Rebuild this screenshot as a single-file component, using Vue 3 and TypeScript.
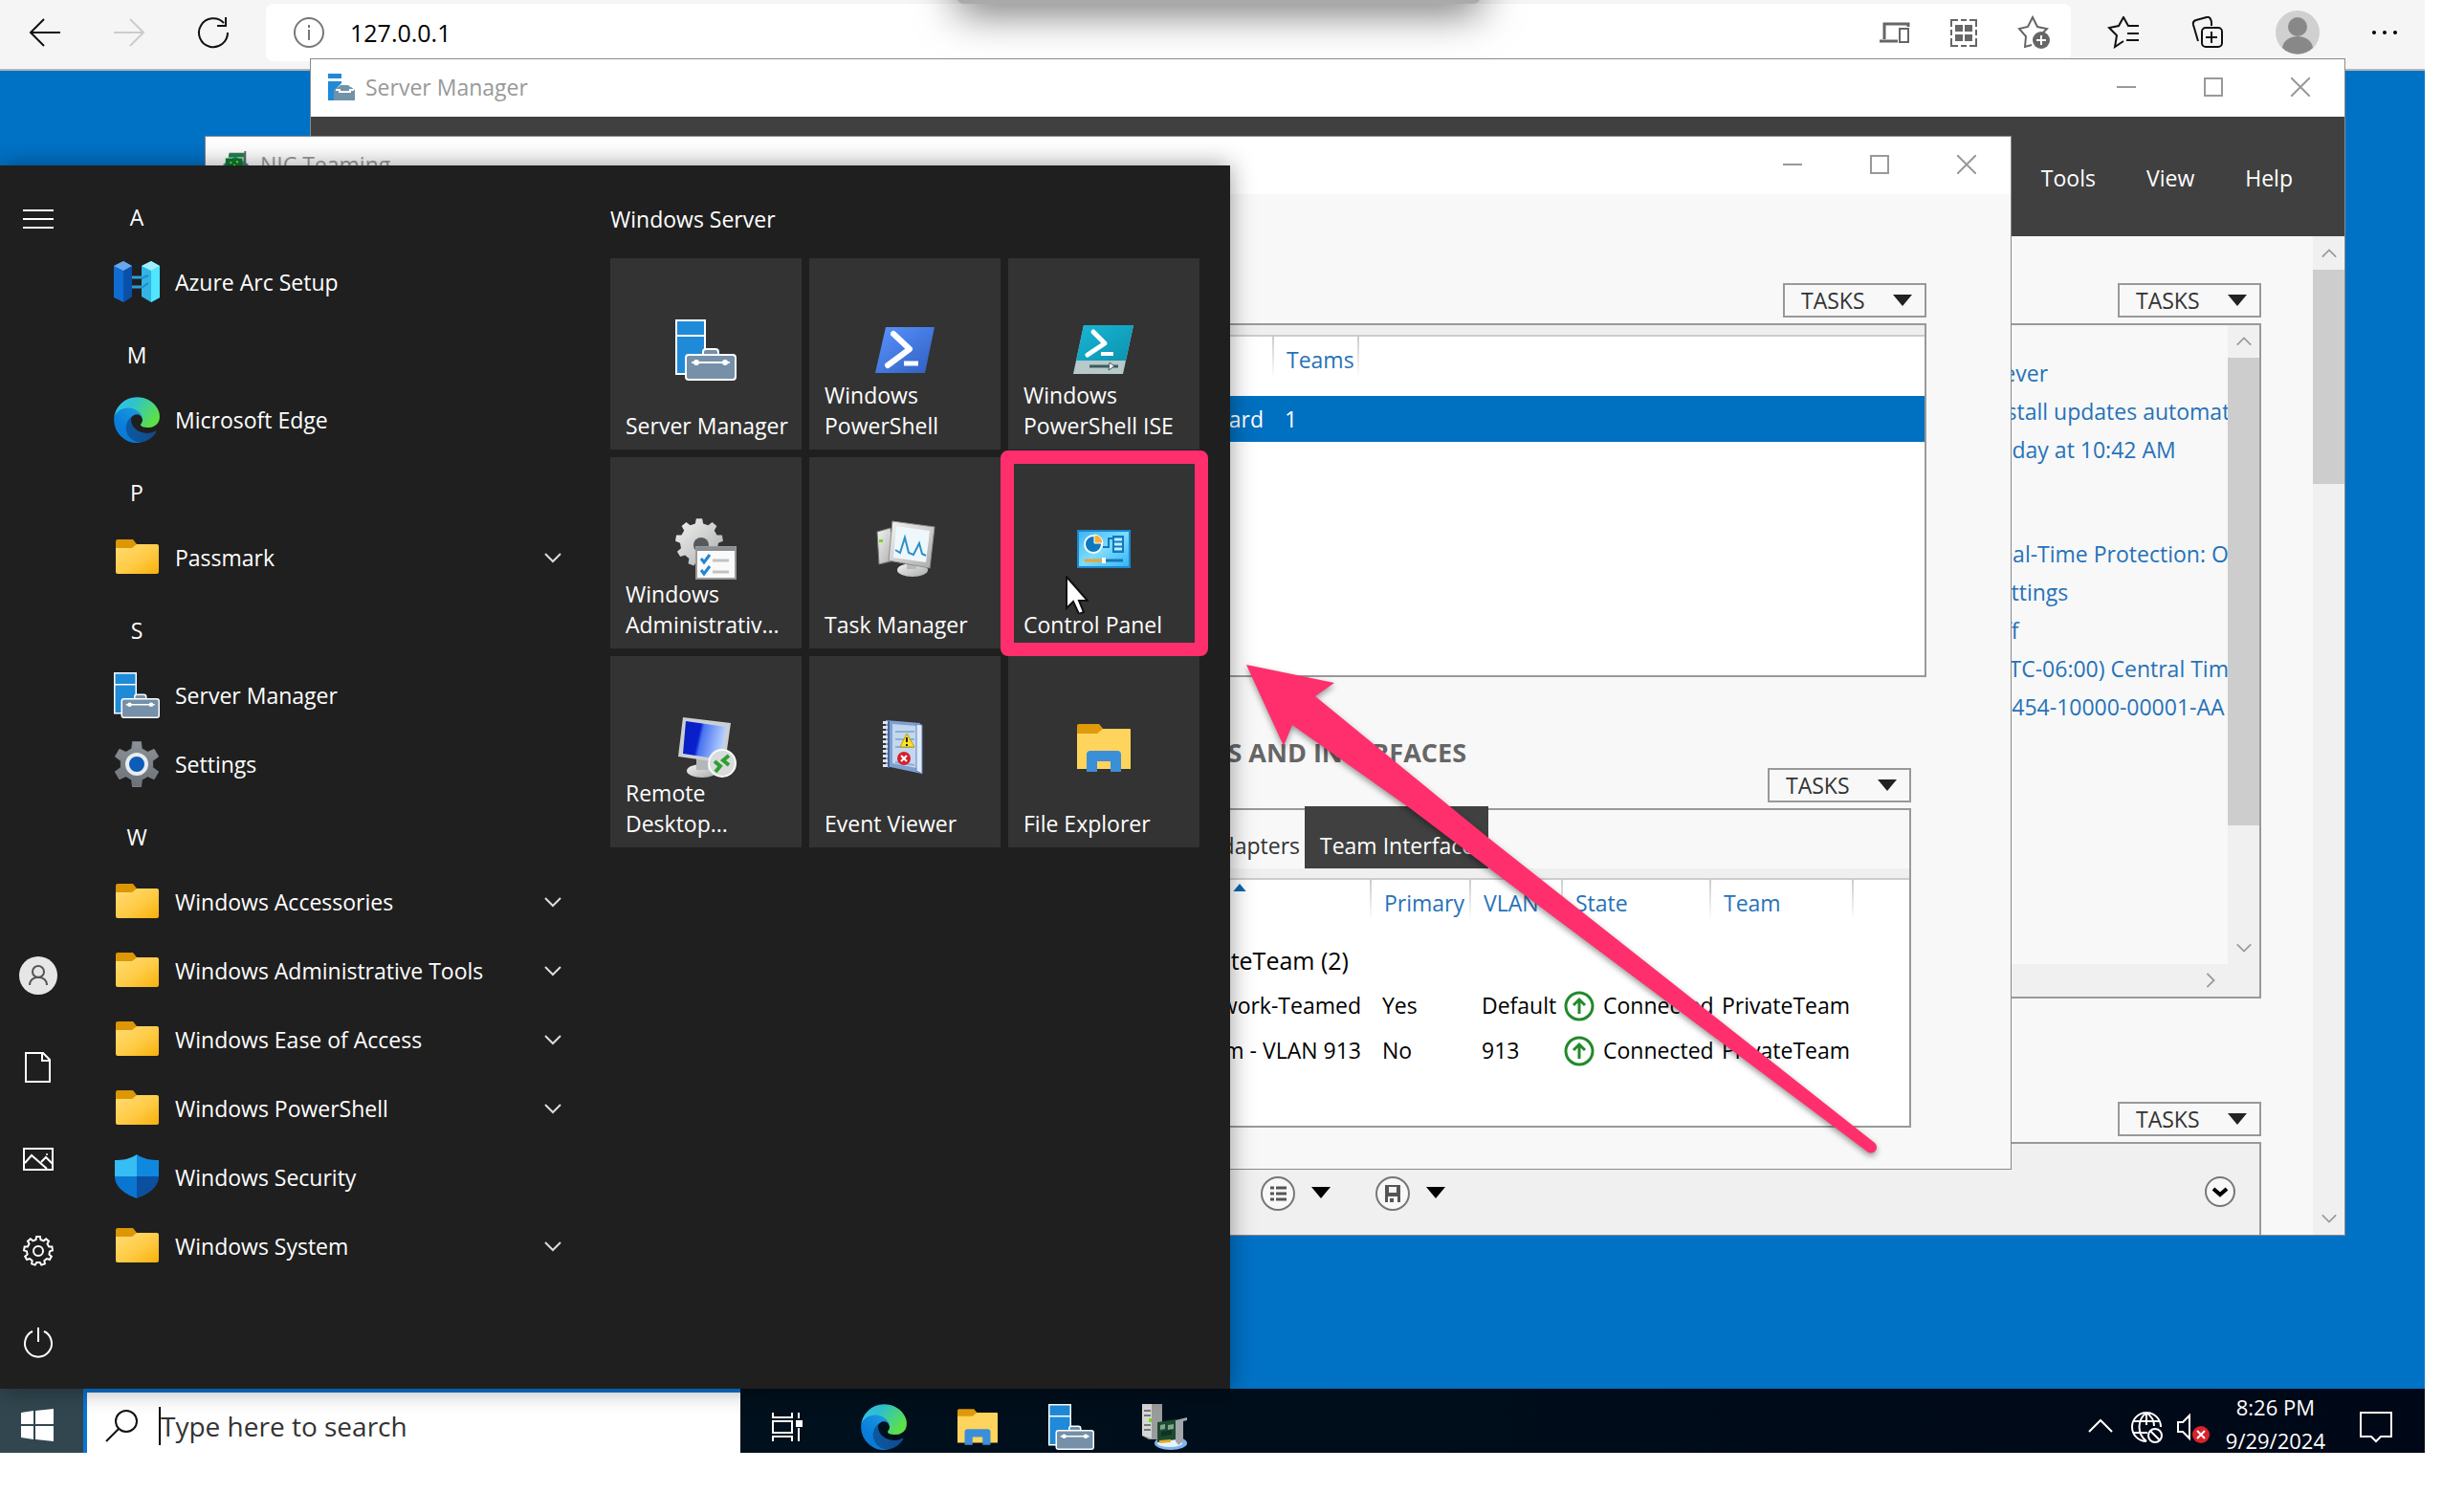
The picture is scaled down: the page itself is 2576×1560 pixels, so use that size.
<script setup lang="ts">
interface MenuEntry {
  letter?: string
  label?: string
  icon?: string
  folder?: boolean
}

interface Tile {
  lines: string[]
  icon: string
}

const menuEntries: MenuEntry[] = [
  { letter: 'A' },
  { label: 'Azure Arc Setup', icon: 'arc' },
  { letter: 'M' },
  { label: 'Microsoft Edge', icon: 'edge' },
  { letter: 'P' },
  { label: 'Passmark', icon: 'folder', folder: true },
  { letter: 'S' },
  { label: 'Server Manager', icon: 'server' },
  { label: 'Settings', icon: 'settings' },
  { letter: 'W' },
  { label: 'Windows Accessories', icon: 'folder', folder: true },
  { label: 'Windows Administrative Tools', icon: 'folder', folder: true },
  { label: 'Windows Ease of Access', icon: 'folder', folder: true },
  { label: 'Windows PowerShell', icon: 'folder', folder: true },
  { label: 'Windows Security', icon: 'shield' },
  { label: 'Windows System', icon: 'folder', folder: true },
]

const tiles: Tile[] = [
  { lines: ['Server Manager'], icon: 'server' },
  { lines: ['Windows', 'PowerShell'], icon: 'powershell' },
  { lines: ['Windows', 'PowerShell ISE'], icon: 'ise' },
  { lines: ['Windows', 'Administrativ...'], icon: 'admin' },
  { lines: ['Task Manager'], icon: 'taskmgr' },
  { lines: ['Control Panel'], icon: 'control' },
  { lines: ['Remote', 'Desktop...'], icon: 'remote' },
  { lines: ['Event Viewer'], icon: 'event' },
  { lines: ['File Explorer'], icon: 'explorer' },
]

const railIcons = [
  { icon: 'user', label: 'Account' },
  { icon: 'document', label: 'Documents' },
  { icon: 'picture', label: 'Pictures' },
  { icon: 'gear', label: 'Settings' },
  { icon: 'power', label: 'Power' },
]

const taskbarApps = [
  { icon: 'taskview', label: 'Task View' },
  { icon: 'edge', label: 'Microsoft Edge' },
  { icon: 'explorer', label: 'File Explorer' },
  { icon: 'server', label: 'Server Manager' },
  { icon: 'nic', label: 'NIC Teaming' },
]

const updateLinks = ['Never', 'Install updates automat', 'Today at 10:42 AM']
const systemLinks = [
  'Real-Time Protection: O',
  'Settings',
  'Off',
  '(UTC-06:00) Central Tim',
  '00454-10000-00001-AA',
]

const interfaces = [
  { name: 'Network-Teamed', primary: 'Yes', vlan: 'Default', state: 'Connected', team: 'PrivateTeam' },
  { name: 'PrivateTeam - VLAN 913', primary: 'No', vlan: '913', state: 'Connected', team: 'PrivateTeam' },
]

const captionButtons = ['minimize', 'maximize', 'close']

// Closed outline of a cog wheel centred on (c, c).
function cog(c: number, outer: number, inner: number, teeth: number): string {
  const step = (Math.PI * 2) / teeth
  const points: string[] = []
  for (let i = 0; i < teeth; i++) {
    const a = i * step - Math.PI / 2
    const corners: [number, number][] = [
      [inner, a - step * 0.3],
      [outer, a - step * 0.18],
      [outer, a + step * 0.18],
      [inner, a + step * 0.3],
    ]
    for (const [r, t] of corners) {
      points.push(`${(c + r * Math.cos(t)).toFixed(2)} ${(c + r * Math.sin(t)).toFixed(2)}`)
    }
  }
  return `M${points.join('L')}Z`
}
</script>

<template>
  <svg class="sprite" aria-hidden="true">
    <defs>
      <linearGradient id="g-folder" x1="0" y1="0" x2="1" y2="1">
        <stop offset="0" stop-color="#ffdc74" /><stop offset=".55" stop-color="#ffcb45" /><stop offset="1" stop-color="#f8b00a" />
      </linearGradient>
      <linearGradient id="g-edge-a" x1="0" y1="0" x2="1" y2="0">
        <stop offset="0" stop-color="#0c59a4" /><stop offset="1" stop-color="#114a8b" />
      </linearGradient>
      <linearGradient id="g-edge-b" x1=".8" y1="0" x2=".2" y2="1">
        <stop offset="0" stop-color="#1b9de2" /><stop offset=".6" stop-color="#0a7fdb" /><stop offset="1" stop-color="#0a78d0" />
      </linearGradient>
      <linearGradient id="g-edge-c" x1="0" y1="0" x2="1" y2=".5">
        <stop offset="0" stop-color="#35c1f1" /><stop offset=".4" stop-color="#2fc2d2" /><stop offset="1" stop-color="#5be049" />
      </linearGradient>
      <linearGradient id="g-ps" x1="0" y1="0" x2="1" y2="1">
        <stop offset="0" stop-color="#5a94ff" /><stop offset="1" stop-color="#2f5fc0" />
      </linearGradient>
      <linearGradient id="g-ise" x1="0" y1="0" x2="1" y2="1">
        <stop offset="0" stop-color="#19b6d6" /><stop offset="1" stop-color="#0b93ae" />
      </linearGradient>
      <linearGradient id="g-metal" x1="0" y1="0" x2="1" y2="1">
        <stop offset="0" stop-color="#f4f4f2" /><stop offset="1" stop-color="#a9abab" />
      </linearGradient>
      <linearGradient id="g-cp" x1="0" y1="0" x2="1" y2="1">
        <stop offset="0" stop-color="#3cb4f4" /><stop offset=".5" stop-color="#7fdcff" /><stop offset="1" stop-color="#36b2f2" />
      </linearGradient>
      <linearGradient id="g-screen" x1="0" y1="0" x2="1" y2=".2">
        <stop offset="0" stop-color="#0722bb" /><stop offset=".42" stop-color="#0a1fd0" /><stop offset=".5" stop-color="#4a74f0" /><stop offset="1" stop-color="#b4d0ff" />
      </linearGradient>
      <linearGradient id="g-gear" x1="0" y1="0" x2="0" y2="1">
        <stop offset="0" stop-color="#8c9297" /><stop offset="1" stop-color="#6b7177" />
      </linearGradient>
    </defs>

    <symbol id="i-folder" viewBox="0 0 48 48">
      <path d="M2 7a2 2 0 0 1 2-2h16l4 5-2 6H2z" fill="#dc9606" />
      <path d="M2 14h17l5-4h21a2 2 0 0 1 2 2v27a2 2 0 0 1-2 2H4a2 2 0 0 1-2-2z" fill="url(#g-folder)" />
    </symbol>
    <symbol id="i-explorer" viewBox="0 0 64 64">
      <path d="M4 9a2 2 0 0 1 2-2h21l5 6-3 6H4z" fill="#e09a0c" />
      <path d="M4 17h21l6-5h28a1 1 0 0 1 1 1v41H4z" fill="#ffd45c" />
      <path d="M14 57V39q0-4 4-4h28q4 0 4 4v18H39V46H25v11z" fill="#3b8ed8" />
    </symbol>
    <symbol id="i-edge" viewBox="4 4 257 256">
      <path fill="url(#g-edge-a)" d="M235.68 195.46a93.73 93.73 0 0 1-10.54 4.71 101.87 101.87 0 0 1-35.9 6.46c-47.32 0-88.54-32.55-88.54-74.32A31.48 31.48 0 0 1 117.13 105c-42.8 1.8-53.8 46.4-53.8 72.53 0 73.88 68.09 81.37 82.76 81.37 7.91 0 19.84-2.3 27-4.56l1.31-.44a128.34 128.34 0 0 0 66.6-52.8 4 4 0 0 0-5.32-5.64z" />
      <path fill="url(#g-edge-b)" d="M110.34 246.34A79.2 79.2 0 0 1 87.6 225a80.72 80.72 0 0 1 29.53-120c3.12-1.47 8.45-4.13 15.54-4a32.35 32.35 0 0 1 25.69 13 31.88 31.88 0 0 1 6.36 18.66c0-.21 24.46-79.6-80-79.6-43.9 0-80 41.66-80 78.21a130.15 130.15 0 0 0 12.11 56 128 128 0 0 0 156.38 67.11 75.55 75.55 0 0 1-62.78-8z" />
      <path fill="url(#g-edge-c)" d="M156.94 153.78c-.81 1.05-3.3 2.5-3.3 5.66 0 2.61 1.7 5.12 4.72 7.23 14.38 10 41.49 8.68 41.56 8.68a59.56 59.56 0 0 0 30.27-8.35 61.38 61.38 0 0 0 30.43-52.88c.26-22.41-8-37.31-11.34-43.91-21.19-41.45-66.93-65.29-116.67-65.29a128 128 0 0 0-128 126.2c.48-36.54 36.8-66.05 80-66.05 3.5 0 23.46.34 42 10.07 16.34 8.58 24.9 18.94 30.85 29.21 6.18 10.67 7.28 24.15 7.28 29.52s-2.74 13.33-7.8 19.91z" />
    </symbol>
    <symbol id="i-arc" viewBox="0 0 48 48">
      <path d="M18 19h12M18 29h12" stroke="#2a9fd8" stroke-width="3" />
      <path d="M0 7 10 2l9 5v32l-9 6-10-5z" fill="#0f6cd0" />
      <path d="M10 12 19 7v32l-9 6z" fill="#0a4fa8" />
      <path d="M0 7 10 2l9 5-9 5z" fill="#6aa8ec" />
      <path d="M29 7l10-5 9 5v33l-9 5-10-6z" fill="#33b4e4" />
      <path d="M39 12 48 7v33l-9 5z" fill="#50e6ff" />
      <path d="M29 7l10-5 9 5-9 5z" fill="#a2f0ff" />
      <path d="M29 20l7-3M29 30l7-5" stroke="#1b8fc8" stroke-width="2" />
    </symbol>
    <symbol id="i-server" viewBox="0 0 64 64">
      <path d="M1 1h30v56H1z" fill="#1f8ad8" stroke="#fff" stroke-width="2" />
      <path d="M1 17h30" stroke="#fff" stroke-width="2" />
      <path d="M29 38v-4q0-3 3-3h10q3 0 3 3v4" fill="#7590a8" stroke="#fff" stroke-width="2" />
      <rect x="11" y="37" width="52" height="26" rx="3" fill="#7590a8" stroke="#fff" stroke-width="2" />
      <path d="M17 45h40" stroke="#fff" stroke-width="2" />
      <circle cx="22" cy="45" r="3" fill="#fff" /><circle cx="52" cy="45" r="3" fill="#fff" />
    </symbol>
    <symbol id="i-server-sm" viewBox="0 0 28 28">
      <path d="M0 0h14v5H0zM0 8h14v2L6 18v10H0z" fill="#1f8ad8" />
      <path d="M6 17l4-3h14l4 3v11H6z" fill="#7292a8" /><path d="M12 15q0-2 2-2h6q2 0 2 2" fill="none" stroke="#7292a8" stroke-width="2" />
      <path d="M8 17h4v2h11v-2h4" fill="none" stroke="#fff" stroke-width="2" />
    </symbol>
    <symbol id="i-settings" viewBox="0 0 48 48">
      <path :d="cog(24, 24, 17, 6)" fill="url(#g-gear)" stroke="#7b8187" stroke-width="1" stroke-linejoin="round" />
      <circle cx="24" cy="24" r="10" fill="#0c5cb8" stroke="#e8ecf0" stroke-width="4" />
    </symbol>
    <symbol id="i-shield" viewBox="0 0 48 48">
      <path d="M24 0C17 5 9 6 1 6v17h23z" fill="#35bdf4" /><path d="M24 0c7 5 15 6 23 6v17H24z" fill="#0f88e0" />
      <path d="M1 23c0 12 12 19 23 23V23z" fill="#0b76d1" /><path d="M47 23c0 12-12 19-23 23V23z" fill="#0b4f9f" />
    </symbol>
    <symbol id="i-powershell" viewBox="0 0 64 64">
      <path d="M12 8h51L53 56H1z" fill="url(#g-ps)" />
      <path d="M20 15l17 16-23 17" fill="none" stroke="#fff" stroke-width="6" stroke-linecap="round" stroke-linejoin="round" />
      <path d="M31 46h15" stroke="#fff" stroke-width="5" />
    </symbol>
    <symbol id="i-ise" viewBox="0 0 64 64">
      <path d="M11 6h52L52 57H0z" fill="#b7c9ca" /><path d="M11 6h52l-8 37H3z" fill="url(#g-ise)" />
      <path d="M21 13l12 12-18 12" fill="none" stroke="#fff" stroke-width="5" stroke-linecap="round" stroke-linejoin="round" />
      <path d="M29 36h13" stroke="#fff" stroke-width="4" />
      <path d="M17 49h30" stroke="#3e5a5c" stroke-width="3" /><path d="M38 45l5 4-6 4z" fill="#fff" stroke="#3e5a5c" />
    </symbol>
    <symbol id="i-admin" viewBox="0 0 64 64">
      <path :d="cog(25, 25, 20, 9)" fill="url(#g-metal)" /><circle cx="27" cy="28" r="8" fill="#55595c" />
      <path d="M22 30h41v33H22z" fill="#fafafa" stroke="#9a9a9a" stroke-width="2" /><path d="M22 32h41" stroke="#8b8f92" stroke-width="4" />
      <path d="M27 42l3 4 6-8M27 54l3 4 6-8" fill="none" stroke="#1e86d6" stroke-width="3" /><path d="M39 44h17M39 56h17" stroke="#c2c2c2" stroke-width="3" />
    </symbol>
    <symbol id="i-taskmgr" viewBox="0 0 64 64">
      <path d="M3 14l14-4 4 34-16 4z" fill="url(#g-metal)" stroke="#777" /><path d="M5 22h4v3H5z" fill="#6fdc1c" />
      <ellipse cx="40" cy="54" rx="16" ry="7" fill="url(#g-metal)" /><path d="M34 44h10v9H34z" fill="#b8bab9" />
      <path d="M19 3l44 6-5 43-43-8z" fill="url(#g-metal)" stroke="#8d8f8f" />
      <path d="M23 8l35 5-4 33-34-5z" fill="#eef7fc" />
      <path d="M22 33l5 3 5-16 4 16 5 2 6-12 3 11 4 2" fill="none" stroke="#2c8fc9" stroke-width="2" />
    </symbol>
    <symbol id="i-control" viewBox="0 0 64 64">
      <path d="M5 13h54v38H5z" fill="url(#g-cp)" stroke="#1a88d0" stroke-width="2" />
      <circle cx="21" cy="27" r="9" fill="#0e79c0" stroke="#fff" stroke-width="2" /><path d="M22 26V17a9 9 0 0 1 9 9z" fill="#f8b13a" stroke="#fff" />
      <path d="M31 30h6v-9h5" fill="none" stroke="#0e79c0" stroke-width="2" /><path d="M41 18h12v18H41z" fill="#0e79c0" />
      <path d="M43 22h8M43 27h8M43 32h8" stroke="#bfefff" stroke-width="3" />
      <path d="M12 44h19" stroke="#f0a326" stroke-width="3" /><path d="M34 44h18" stroke="#0e79c0" stroke-width="3" /><path d="M30 41h4v6h-4z" fill="#fff" />
    </symbol>
    <symbol id="i-remote" viewBox="0 0 64 64">
      <ellipse cx="28" cy="56" rx="16" ry="7" fill="url(#g-metal)" /><path d="M22 43h12v12H22z" fill="#b4b6b8" />
      <path d="M8 0l50 6-6 42L3 41z" fill="#ccd0d4" /><path d="M11 4l42 6-5 34-40-6z" fill="url(#g-screen)" />
      <circle cx="49" cy="48" r="14" fill="#d9dcda" stroke="#fafafa" stroke-width="2" />
      <path d="M41 46l6 5-5 6M56 40l-6 5 6 5" fill="none" stroke="#2f9e35" stroke-width="4" />
    </symbol>
    <symbol id="i-event" viewBox="0 0 64 64">
      <path d="M12 3l36 3 2 53-38-8z" fill="#7fa0cf" /><path d="M19 7l25 2v44l-25-5z" fill="#c3d8ee" />
      <path d="M44 7l6 1v51l-6-3z" fill="#e0eaf8" stroke="#5f83bd" />
      <path d="M22 15h20M22 23h20M22 31h20M22 47l20 3" stroke="#8daed4" stroke-width="2" />
      <path d="M12 4v48" stroke="#dfe4ea" stroke-width="6" stroke-dasharray="3 2" /><path d="M15 4v49" stroke="#47669b" stroke-width="2" />
      <path d="M34 17l8 14H27z" fill="#ffe12a" stroke="#c39b00" /><path d="M34 21v5M34 28v2" stroke="#222" stroke-width="2" />
      <circle cx="31" cy="43" r="7" fill="#d5202a" /><path d="M28 40l6 6M34 40l-6 6" stroke="#fff" stroke-width="2" />
    </symbol>
    <symbol id="i-nic" viewBox="0 0 48 48">
      <path d="M0 0h21v37l-14 0-7-4z" fill="#9a9c9c" /><path d="M0 0h10v36L0 33z" fill="#d5d7d7" /><path d="M2 7h7M2 12h7M2 22h7M2 27h7" stroke="#777" stroke-width="2" /><path d="M7 15h3v4H7z" fill="#6fdc1c" />
      <ellipse cx="30" cy="41" rx="17" ry="7" fill="#7fb4ee" /><ellipse cx="29" cy="41" rx="13" ry="4" fill="#e7f3ff" />
      <path d="M16 19l20-3v21l-20 3z" fill="#1c4a30" /><path d="M19 22l5-1v5l-5 1zM27 22l6-1v5l-6 1z" fill="#7fa58a" /><path d="M20 29l11-2v5l-11 2z" fill="#0d3523" />
      <path d="M18 38l12-1v3l-12 1z" fill="#e5aa22" /><path d="M35 17l12-3v3l-4 1v21l-5 4-3-4z" fill="#a2a6a8" />
    </symbol>
    <symbol id="i-nic-sm" viewBox="0 0 30 30">
      <path d="M0 15l14-9 15 9-14 13z" fill="#3a86c8" /><path d="M7 2h17V0h2v24h-3V6L7 7z" fill="#5d6e64" />
      <path d="M3 8h19v18H3z" fill="#0c7c2a" /><path d="M7 3h16v4H6z" fill="#18874a" /><path d="M8 13h2M12 16h2M15 12h2M9 18h2" stroke="#9be07a" stroke-width="2" />
    </symbol>

    <symbol id="i-user" viewBox="0 0 40 40">
      <circle cx="20" cy="20" r="20" fill="#e6e6e6" /><circle cx="20" cy="16" r="6" fill="none" stroke="#555" stroke-width="2" />
      <path d="M11 30c0-11 18-11 18 0" fill="none" stroke="#555" stroke-width="2" />
    </symbol>
    <symbol id="i-document" viewBox="0 0 40 40"><path d="M7 5h18l7 7v23H7zM24 5v8h8" fill="none" stroke="#fff" stroke-width="2" /></symbol>
    <symbol id="i-picture" viewBox="0 0 40 40">
      <path d="M5 9h30v22H5z" fill="none" stroke="#fff" stroke-width="2" /><path d="M6 24l7-8 16 14M23 23l5-5 7 7" fill="none" stroke="#fff" stroke-width="2" /><circle cx="29" cy="15" r="1" fill="#fff" />
    </symbol>
    <symbol id="i-gear" viewBox="0 0 40 40"><path :d="cog(20, 15, 12, 9)" fill="none" stroke="#fff" stroke-width="2" /><circle cx="20" cy="20" r="5" fill="none" stroke="#fff" stroke-width="2" /></symbol>
    <symbol id="i-power" viewBox="0 0 40 40"><path d="M14 8a14 14 0 1 0 12 0M20 4v15" fill="none" stroke="#fff" stroke-width="2" /></symbol>
    <symbol id="i-taskview" viewBox="0 0 32 32">
      <path d="M1 1v5h20V1M1 31v-5h20v5M1 10h20v12H1zM28 1v6M28 17v14" fill="none" stroke="#fff" stroke-width="2" /><path d="M25 9h7v7h-7z" fill="#fff" />
    </symbol>
    <symbol id="i-down" viewBox="0 0 20 20"><path d="M2 6l8 8 8-8" fill="none" stroke="currentColor" stroke-width="2" /></symbol>
    <symbol id="i-triangle" viewBox="0 0 20 12"><path d="M0 0h20L10 12z" fill="currentColor" /></symbol>
    <symbol id="i-minimize" viewBox="0 0 20 20"><path d="M0 10h20" stroke="currentColor" stroke-width="2" /></symbol>
    <symbol id="i-maximize" viewBox="0 0 20 20"><path d="M1 1h18v18H1z" fill="none" stroke="currentColor" stroke-width="2" /></symbol>
    <symbol id="i-close" viewBox="0 0 20 20"><path d="M0 0l20 20M20 0L0 20" stroke="currentColor" stroke-width="2" /></symbol>
    <symbol id="i-up-circle" viewBox="0 0 32 32">
      <circle cx="16" cy="16" r="14" fill="#fff" stroke="#23892b" stroke-width="3" /><path d="M16 24V10M10 15l6-6 6 6" fill="none" stroke="#23892b" stroke-width="3" />
    </symbol>
  </svg>

  <div class="screen">
    <header class="browser">
      <button class="plain nav-btn" aria-label="Back">
        <svg width="34" height="34" viewBox="0 0 34 34"><path d="M33 17H2M16 3L2 17l14 14" fill="none" stroke="#111" stroke-width="2" /></svg>
      </button>
      <button class="plain nav-btn" aria-label="Forward">
        <svg width="34" height="34" viewBox="0 0 34 34"><path d="M1 17h31M18 3l14 14-14 14" fill="none" stroke="#ccc" stroke-width="2" /></svg>
      </button>
      <button class="plain nav-btn" aria-label="Refresh">
        <svg width="34" height="34" viewBox="0 0 34 34"><path d="M32 17A15 15 0 1 1 28 7M30 1v9h-9" fill="none" stroke="#111" stroke-width="2" /></svg>
      </button>
      <div class="address">
        <svg width="34" height="34" viewBox="0 0 34 34"><circle cx="17" cy="17" r="15" fill="none" stroke="#777" stroke-width="2" /><path d="M17 14v11M17 9v3" stroke="#777" stroke-width="2" /></svg>
        <input class="address-input" type="text" value="127.0.0.1" aria-label="Address" />
        <div class="address-icons">
          <svg width="32" height="34" viewBox="0 0 32 34"><path d="M5 24V8h25v3M0 26h19" fill="none" stroke="#666" stroke-width="3" /><path d="M21 13h9v14h-9z" fill="none" stroke="#666" stroke-width="2" /></svg>
          <svg width="32" height="34" viewBox="0 0 32 34"><path d="M3 11V4h7M22 4h7v7M29 23v8h-7M10 31H3v-8M13 4h6M13 31h6M3 14v6M29 14v6" fill="none" stroke="#666" stroke-width="2" /><path d="M7 9h8v7H7zM17 9h8v7h-8zM7 19h8v7H7zM17 19h8v7h-8z" fill="#666" /></svg>
          <svg width="36" height="36" viewBox="0 0 36 36"><path d="M15 31l-7 2 1-11-7-8 9-2 5-10 5 10 10 2-4 4" fill="none" stroke="#666" stroke-width="2" /><circle cx="25" cy="26" r="9" fill="#666" /><path d="M25 21v10M20 26h10" stroke="#fff" stroke-width="2" /></svg>
        </div>
      </div>
      <div class="browser-tools">
        <svg width="34" height="34" viewBox="0 0 34 34"><path d="M17 26l-9 6 2-12-8-8 10-2 5-9 5 9h11M21 18h12M20 25h13" fill="none" stroke="#111" stroke-width="2" /></svg>
        <svg width="34" height="34" viewBox="0 0 34 34"><path d="M7 26L2 9q-1-4 3-5l11-3q4-1 5 5v4" fill="none" stroke="#111" stroke-width="2" /><rect x="11" y="12" width="21" height="20" rx="4" fill="none" stroke="#111" stroke-width="2" /><path d="M21 16v12M15 22h12" stroke="#111" stroke-width="2" /></svg>
        <svg width="46" height="46" viewBox="0 0 46 46"><circle cx="23" cy="23" r="23" fill="#d0d0d0" /><circle cx="23" cy="17" r="10" fill="#888" /><path d="M7 39c2-16 30-16 32 0a23 23 0 0 1-32 0z" fill="#888" /></svg>
        <svg width="28" height="8" viewBox="0 0 28 8"><circle cx="3" cy="4" r="2" /><circle cx="14" cy="4" r="2" /><circle cx="25" cy="4" r="2" /></svg>
      </div>
    </header>
    <div class="overlay-edge"></div>

    <section class="window server-manager">
      <div class="titlebar">
        <svg class="title-icon"><use href="#i-server-sm" /></svg>
        <span class="title">Server Manager</span>
        <button v-for="b in captionButtons" :key="b" class="plain caption" :aria-label="b"><svg><use :href="'#i-' + b" /></svg></button>
      </div>
      <nav class="sm-menu">
        <a href="#">Tools</a><a href="#">View</a><a href="#">Help</a>
      </nav>
      <div class="sm-body">
        <div class="sm-main">
          <button class="tasks">TASKS<svg><use href="#i-triangle" /></svg></button>
          <div class="details">
            <div class="detail-links">
              <a v-for="l in updateLinks" :key="l" href="#">{{ l }}</a>
              <span class="spacer"></span>
              <a v-for="l in systemLinks" :key="l" href="#">{{ l }}</a>
            </div>
            <div class="vscroll">
              <svg class="flip"><use href="#i-down" /></svg>
              <div class="thumb inner-thumb"></div>
              <svg class="end"><use href="#i-down" /></svg>
            </div>
            <div class="hscroll"><svg class="right"><use href="#i-down" /></svg></div>
          </div>
          <button class="tasks lower">TASKS<svg><use href="#i-triangle" /></svg></button>
          <div class="filter-bar">
            <button class="round" aria-label="Queries"><svg width="20" height="20" viewBox="0 0 20 20"><path d="M2 4h4M8 4h11M2 10h4M8 10h11M2 16h4M8 16h11" stroke="#555" stroke-width="3" /></svg></button>
            <svg class="tri"><use href="#i-triangle" /></svg>
            <button class="round second" aria-label="Save"><svg width="20" height="20" viewBox="0 0 20 20"><path d="M2 1h16v18h-3v-6H5v6H2z" fill="#555" /><path d="M6 3h8v6H6z" fill="#f4f4f4" /><path d="M7 15h4v4H7z" fill="#555" /></svg></button>
            <svg class="tri"><use href="#i-triangle" /></svg>
            <button class="round expand" aria-label="Expand"><svg width="20" height="20" viewBox="0 0 20 20"><path d="M3 7l7 6 7-6" fill="none" stroke="#000" stroke-width="4" /></svg></button>
          </div>
        </div>
        <div class="vscroll outer">
          <svg class="flip"><use href="#i-down" /></svg>
          <div class="thumb outer-thumb"></div>
          <svg class="end"><use href="#i-down" /></svg>
        </div>
      </div>
    </section>

    <section class="window nic">
      <div class="titlebar">
        <svg class="title-icon"><use href="#i-nic-sm" /></svg>
        <span class="title">NIC Teaming</span>
        <button v-for="b in captionButtons" :key="b" class="plain caption" :aria-label="b"><svg><use :href="'#i-' + b" /></svg></button>
      </div>
      <div class="nic-body">
        <button class="tasks">TASKS<svg><use href="#i-triangle" /></svg></button>
        <div class="panel servers">
          <div class="strip"></div>
          <table>
            <colgroup><col /><col class="c-teams" /><col class="c-rest" /></colgroup>
            <thead><tr><th></th><th>Teams</th><th></th></tr></thead>
            <tbody><tr class="selected"><td class="name">ard</td><td>1</td><td></td></tr></tbody>
          </table>
        </div>
        <div class="interfaces-block">
          <h2>ADAPTERS AND INTERFACES</h2>
          <button class="tasks">TASKS<svg><use href="#i-triangle" /></svg></button>
          <div class="panel interfaces">
            <div class="tabs">
              <button class="tab">Adapters</button>
              <button class="tab active">Team Interfaces</button>
            </div>
            <div class="strip"></div>
            <table>
              <colgroup><col /><col class="c-primary" /><col class="c-vlan" /><col class="c-state" /><col class="c-team" /><col class="c-end" /></colgroup>
              <thead>
                <tr><th class="sorted"><svg><use href="#i-triangle" /></svg></th><th>Primary</th><th>VLAN</th><th>State</th><th>Team</th><th></th></tr>
              </thead>
              <tbody>
                <tr><td class="name group">PrivateTeam (2)</td><td colspan="5"></td></tr>
                <tr v-for="row in interfaces" :key="row.name">
                  <td class="name">{{ row.name }}</td>
                  <td>{{ row.primary }}</td>
                  <td>{{ row.vlan }}</td>
                  <td class="state"><span><svg><use href="#i-up-circle" /></svg>{{ row.state }}</span></td>
                  <td>{{ row.team }}</td>
                  <td></td>
                </tr>
              </tbody>
            </table>
          </div>
        </div>
      </div>
    </section>

    <section class="start-menu">
      <div class="rail">
        <button class="plain hamburger" aria-label="Expand menu"><svg width="32" height="20" viewBox="0 0 32 20"><path d="M0 1h32M0 10h32M0 19h32" stroke="#fff" stroke-width="2" /></svg></button>
        <button v-for="r in railIcons" :key="r.icon" class="plain rail-btn" :aria-label="r.label"><svg><use :href="'#i-' + r.icon" /></svg></button>
      </div>
      <div class="apps">
        <template v-for="(e, i) in menuEntries" :key="i">
          <div v-if="e.letter" class="letter"><span>{{ e.letter }}</span></div>
          <button v-else class="plain app">
            <svg class="app-icon"><use :href="'#i-' + e.icon" /></svg>
            <span>{{ e.label }}</span>
            <svg v-if="e.folder" class="chevron"><use href="#i-down" /></svg>
          </button>
        </template>
      </div>
      <div class="tile-area">
        <h3>Windows Server</h3>
        <div class="tiles">
          <button v-for="t in tiles" :key="t.icon" class="tile">
            <svg><use :href="'#i-' + t.icon" /></svg>
            <span class="tile-label"><span v-for="l in t.lines" :key="l">{{ l }}</span></span>
          </button>
        </div>
      </div>
    </section>

    <div class="highlight"></div>
    <svg class="pointer" viewBox="0 0 24 40"><path d="M1 1v33l7-7 6 13 5-2-5-12h9z" fill="#fff" stroke="#111" stroke-width="2" /></svg>
    <svg class="arrow" viewBox="0 0 670 520">
      <path d="M3 5l92 19-20 14 181 148 404 319a6 6 0 0 1-8 9L290 243 174 155 51 68l-9 22z" fill="#ff2f6d" />
    </svg>

    <footer class="taskbar">
      <button class="start" aria-label="Start"><svg width="34" height="34" viewBox="0 0 34 34"><path d="M0 4l13-2v14H0zM15 2l19-2v16H15zM0 18h13v14L0 30zM15 18h19v16l-19-2z" fill="#fff" /></svg></button>
      <label class="search">
        <svg width="34" height="34" viewBox="0 0 34 34"><circle cx="22" cy="12" r="11" fill="none" stroke="#111" stroke-width="2" /><path d="M14 20L1 33" stroke="#111" stroke-width="2" /></svg>
        <span class="caret"></span>
        <input type="text" placeholder="Type here to search" aria-label="Search" />
      </label>
      <button v-for="a in taskbarApps" :key="a.label" class="plain pinned" :class="a.icon" :aria-label="a.label"><svg><use :href="'#i-' + a.icon" /></svg></button>
      <div class="tray">
        <svg width="26" height="34" viewBox="0 0 26 34"><path d="M1 22l12-12 12 12" fill="none" stroke="#fff" stroke-width="2" /></svg>
        <svg width="34" height="34" viewBox="0 0 34 34"><path d="M17 32A15 15 0 1 1 32 17M17 32C7 24 7 10 17 2c6 4 8 9 8 14M3 11h28M3 23h15M17 2v13" fill="none" stroke="#fff" stroke-width="2" /><circle cx="26" cy="26" r="7" fill="none" stroke="#fff" stroke-width="2" /><path d="M21 21l10 10" stroke="#fff" stroke-width="2" /></svg>
        <svg width="36" height="34" viewBox="0 0 36 34"><path d="M2 12h5l7-7v24l-7-7H2z" fill="none" stroke="#fff" stroke-width="2" /><circle cx="26" cy="25" r="9" fill="#d8232a" /><path d="M22 21l8 8M30 21l-8 8" stroke="#fff" stroke-width="2" /></svg>
        <div class="clock"><span>8:26 PM</span><span>9/29/2024</span></div>
        <svg width="34" height="34" viewBox="0 0 34 34"><path d="M1 2h32v25H22l-5 5-5-5H1z" fill="none" stroke="#fff" stroke-width="2" /></svg>
      </div>
    </footer>
  </div>
</template>

<style>
body {
  background: #fff;
  overflow: hidden;
}
</style>

<style scoped>
* {
  box-sizing: border-box;
}
.sprite {
  position: absolute;
  width: 0;
  height: 0;
}
button,
input {
  font: inherit;
  color: inherit;
}
svg {
  display: block;
  flex: none;
}
.plain {
  background: none;
  border: 0;
  padding: 0;
}
a {
  color: inherit;
  text-decoration: none;
}
.screen {
  position: relative;
  display: flex;
  flex-direction: column;
  height: calc(100vh - 41px);
  margin-right: 41px;
  overflow: hidden;
  background: #0072c6;
  font-family: "Open Sans", "Noto Sans", sans-serif;
  font-size: 23px;
  color: #000;
}

/* Browser toolbar */
.browser {
  display: flex;
  align-items: center;
  height: 74px;
  padding: 0 20px 4px 30px;
  background: #f5f5f5;
  border-bottom: 2px solid #b5b5b5;
}
.nav-btn {
  margin-right: 54px;
}
.nav-btn:nth-child(3) {
  margin-right: 38px;
}
.address {
  display: flex;
  flex: 1;
  align-items: center;
  height: 60px;
  padding: 0 20px 0 28px;
  background: #fff;
  border-radius: 8px;
}
.address-input {
  flex: 1;
  min-width: 0;
  margin-left: 26px;
  padding: 0;
  border: 0;
  outline: 0;
  font-size: 25px;
  background: none;
}
.address-icons {
  display: flex;
  align-items: center;
  gap: 40px;
}
.browser-tools {
  display: flex;
  align-items: center;
  gap: 54px;
  margin-left: 38px;
  padding-right: 8px;
}
.overlay-edge {
  position: absolute;
  top: -36px;
  left: 1000px;
  width: 548px;
  height: 40px;
  border-radius: 8px;
  background: #aaa;
  box-shadow: 0 8px 44px rgba(0, 0, 0, 0.6);
  z-index: 4;
}

/* Desktop windows */
.window {
  position: absolute;
  display: flex;
  flex-direction: column;
  border: 1px solid #8a8a8a;
  background: #f8f8f8;
}
.titlebar {
  display: flex;
  align-items: center;
  flex: none;
  height: 60px;
  padding: 0 36px 2px 18px;
  background: #fff;
  color: #999;
}
.title-icon {
  width: 28px;
  height: 30px;
  margin-right: 11px;
}
.title {
  flex: 1;
}
.caption {
  margin-left: 71px;
}
.caption svg {
  width: 20px;
  height: 20px;
}
.server-manager {
  top: 61px;
  left: 324px;
  right: 83px;
  bottom: 227px;
  z-index: 5;
}
.nic {
  top: 142px;
  left: 214px;
  right: 432px;
  bottom: 296px;
  z-index: 6;
}
.sm-menu {
  display: flex;
  justify-content: flex-end;
  flex: none;
  gap: 53px;
  height: 125px;
  padding: 48px 54px 0 0;
  background: #404040;
  color: #fff;
  line-height: 32px;
}
.sm-body {
  display: flex;
  flex: 1;
  min-height: 0;
}
.sm-main {
  display: flex;
  flex: 1;
  flex-direction: column;
  min-width: 0;
  padding: 49px 54px 0 24px;
  overflow: hidden;
}
.tasks {
  display: flex;
  align-items: center;
  justify-content: space-between;
  align-self: flex-end;
  flex: none;
  width: 150px;
  height: 36px;
  padding: 0 13px 0 17px;
  border: 2px solid #999;
  background: #f8f8f8;
  color: #333;
}
.tasks svg {
  width: 20px;
  height: 12px;
  color: #222;
}
.details {
  display: grid;
  grid-template-columns: 1fr 33px;
  grid-template-rows: 1fr 34px;
  flex: none;
  height: 706px;
  margin-top: 6px;
  border: 2px solid #999;
}
.detail-links {
  display: flex;
  flex-direction: column;
  justify-self: end;
  width: 252px;
  padding-top: 30px;
  overflow: hidden;
  color: #2672b8;
  line-height: 40px;
  white-space: nowrap;
}
.spacer {
  height: 69px;
}
.vscroll {
  display: flex;
  flex-direction: column;
  align-items: center;
  background: #f0f0f0;
  color: #9a9a9a;
}
.vscroll svg,
.hscroll svg {
  width: 18px;
  height: 18px;
}
.vscroll .flip {
  margin: 8px 0;
  transform: rotate(180deg);
}
.thumb {
  width: 100%;
  background: #cdcdcd;
}
.inner-thumb {
  height: 489px;
}
.outer {
  flex: none;
  width: 33px;
  padding-top: 1px;
}
.outer-thumb {
  height: 224px;
}
.vscroll .end {
  margin: auto 0 8px;
}
.hscroll {
  display: flex;
  grid-column: 1 / 3;
  align-items: center;
  justify-content: flex-end;
  padding-right: 42px;
  background: #f0f0f0;
  color: #9a9a9a;
}
.right {
  transform: rotate(-90deg);
}
.lower {
  margin-top: 108px;
}
.filter-bar {
  display: flex;
  flex: 1;
  align-items: flex-start;
  margin-top: 6px;
  padding: 34px 25px 0 967px;
  border: 2px solid #999;
  border-bottom: 0;
  background: #f0f0f0;
}
.round {
  display: flex;
  align-items: center;
  justify-content: center;
  width: 36px;
  height: 36px;
  padding: 0;
  border: 2px solid #777;
  border-radius: 50%;
  background: #f8f8f8;
}
.second {
  margin-left: 47px;
}
.expand {
  width: 32px;
  height: 32px;
  margin-left: auto;
}
.tri {
  width: 20px;
  height: 12px;
  margin: 11px 0 0 17px;
}

/* NIC Teaming */
.nic-body {
  display: flex;
  flex: 1;
  flex-direction: column;
  padding: 93px 88px 0 24px;
}
.panel {
  border: 2px solid #999;
  background: #fff;
}
.servers {
  height: 370px;
  margin-top: 6px;
}
.strip {
  height: 12px;
  border-bottom: 2px solid #ccc;
  background: #efefef;
}
table {
  width: 100%;
  table-layout: fixed;
  border-collapse: collapse;
  white-space: nowrap;
}
th {
  height: 61px;
  padding: 0 0 0 13px;
  background: linear-gradient(#ccc, #fff) top right / 2px 43px no-repeat;
  color: #2672b8;
  font-weight: 400;
  line-height: 48px;
  text-align: left;
  vertical-align: top;
}
.servers th {
  height: 62px;
}
th:last-child {
  background: none;
}
td {
  height: 48px;
  padding: 0 0 0 11px;
  line-height: 48px;
}
.interfaces td {
  height: 47px;
  line-height: 47px;
}
td.name {
  padding: 0 11px 0 0;
  text-align: right;
}
td.group {
  padding-right: 24px;
  font-size: 25px;
}
td.state {
  padding-left: 1px;
}
.state span {
  display: flex;
  align-items: center;
  gap: 9px;
}
.state svg {
  width: 32px;
  height: 32px;
}
.selected {
  background: #0070c0;
  color: #fff;
}
.c-teams {
  width: 89px;
}
.c-rest {
  width: 591px;
}
.c-primary {
  width: 104px;
}
.c-vlan {
  width: 96px;
}
.c-state {
  width: 155px;
}
.c-team {
  width: 149px;
}
.c-end {
  width: 58px;
}
.sorted svg {
  width: 14px;
  height: 8px;
  margin: 4px 131px 0 auto;
  color: #0a66b0;
  transform: rotate(180deg);
}
.interfaces-block {
  display: flex;
  flex-direction: column;
  padding: 63px 16px 0 0;
}
h2 {
  margin: 0;
  padding-right: 465px;
  color: #666;
  font-size: 27px;
  line-height: 32px;
  text-align: right;
}
.interfaces {
  height: 334px;
  margin-top: 6px;
}
.tabs {
  display: flex;
  justify-content: flex-end;
  height: 61px;
  padding-right: 440px;
  background: #f8f8f8;
}
.tab {
  height: 65px;
  margin-top: -4px;
  padding: 16px 5px 0 0;
  border: 0;
  background: none;
  color: #333;
}
.active {
  width: 192px;
  padding: 16px 0 0 16px;
  background: #404040;
  color: #fff;
  text-align: left;
  white-space: nowrap;
}

/* Start menu */
.start-menu {
  position: absolute;
  left: 0;
  bottom: 67px;
  display: flex;
  width: 1286px;
  height: 1279px;
  background: #1f1f1f;
  box-shadow: 0 0 24px rgba(0, 0, 0, 0.4);
  color: #fff;
  z-index: 7;
}
.rail {
  display: flex;
  flex-direction: column;
  align-items: center;
  width: 80px;
}
.hamburger {
  margin: 46px 0 auto;
}
.rail-btn {
  display: flex;
  align-items: center;
  justify-content: center;
  width: 80px;
  height: 96px;
}
.rail-btn svg {
  width: 40px;
  height: 40px;
}
.apps {
  display: flex;
  flex-direction: column;
  width: 558px;
  padding: 14px 50px 0 39px;
}
.letter {
  height: 72px;
  padding-top: 8px;
  line-height: 64px;
}
.letter span {
  display: block;
  width: 48px;
  text-align: center;
}
.app {
  display: flex;
  align-items: center;
  height: 72px;
  gap: 16px;
  text-align: left;
}
.app-icon {
  width: 48px;
  height: 48px;
}
.app span {
  flex: 1;
}
.chevron {
  width: 20px;
  height: 20px;
  color: #ddd;
}
h3 {
  margin: 0;
  font-size: 23px;
  font-weight: 400;
  line-height: 32px;
}
.tile-area {
  padding-top: 40px;
}
.tiles {
  display: grid;
  grid-template-columns: repeat(3, 200px);
  grid-auto-rows: 200px;
  gap: 8px;
  margin-top: 25px;
}
.tile {
  display: flex;
  flex-direction: column;
  align-items: center;
  justify-content: space-between;
  padding: 64px 0 9px 16px;
  border: 0;
  background: #333;
}
.tile svg {
  width: 64px;
  height: 64px;
  margin: 0 16px -64px 0;
}
.tile-label {
  display: flex;
  flex-direction: column;
  align-self: stretch;
  margin-top: auto;
  line-height: 32px;
  text-align: left;
  white-space: nowrap;
}

/* Annotations above the desktop */
.highlight {
  position: absolute;
  top: 471px;
  left: 1046px;
  width: 217px;
  height: 215px;
  border: 14px solid #ff2f6d;
  border-radius: 8px;
  z-index: 8;
}
.pointer {
  position: absolute;
  top: 602px;
  left: 1114px;
  width: 24px;
  height: 40px;
  z-index: 9;
}
.arrow {
  position: absolute;
  top: 690px;
  left: 1300px;
  width: 670px;
  height: 520px;
  filter: drop-shadow(0 3px 3px rgba(0, 0, 0, 0.4));
  z-index: 9;
}

/* Taskbar */
.taskbar {
  display: flex;
  align-items: center;
  height: 67px;
  margin-top: auto;
  background: linear-gradient(90deg, #00141f, #000817);
  color: #fff;
}
.start {
  display: flex;
  align-items: center;
  align-self: stretch;
  width: 87px;
  padding: 8px 0 0 22px;
  border: 0;
  background: #31464f;
}
.search {
  display: flex;
  align-items: center;
  align-self: stretch;
  width: 687px;
  padding: 6px 16px 0 19px;
  border-top: 4px solid #0a74d4;
  border-left: 4px solid #0a74d4;
  background: #fff;
  color: #333;
  font-size: 28px;
}
.search input {
  flex: 1;
  min-width: 0;
  padding: 0;
  border: 0;
  outline: 0;
  background: none;
}
.search input::placeholder {
  color: #333;
  opacity: 1;
}
.caret {
  width: 2px;
  height: 40px;
  margin-left: 22px;
  background: #000;
}
.pinned {
  display: flex;
  align-items: center;
  justify-content: center;
  width: 98px;
  padding-top: 12px;
}
.pinned svg {
  width: 48px;
  height: 48px;
}
.taskview {
  margin-right: 3px;
}
.taskview svg {
  width: 32px;
  height: 32px;
}
.tray {
  display: flex;
  align-items: flex-start;
  height: 44px;
  margin-left: auto;
  padding-right: 34px;
}
.tray > svg {
  margin: 11px 0 0 14px;
}
.tray > svg:nth-child(2) {
  margin-left: 18px;
}
.tray > svg:last-child {
  margin-left: 36px;
}
.clock {
  display: flex;
  flex-direction: column;
  align-items: center;
  margin-left: 16px;
  font-size: 22px;
  line-height: 35px;
}
.clock span:first-child {
  margin-top: -10px;
}
</style>
